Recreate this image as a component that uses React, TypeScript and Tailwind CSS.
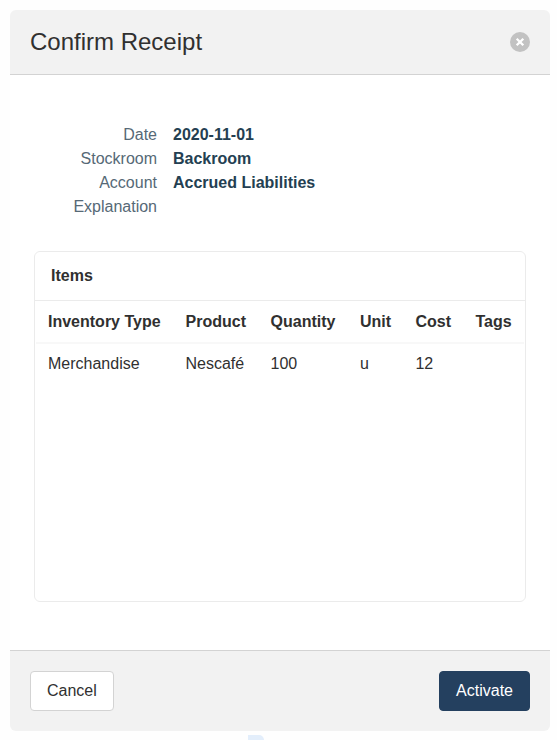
const fields = [
  { label: 'Date', value: '2020-11-01' },
  { label: 'Stockroom', value: 'Backroom' },
  { label: 'Account', value: 'Accrued Liabilities' },
  { label: 'Explanation', value: '' },
];

const columns = ['Inventory Type', 'Product', 'Quantity', 'Unit', 'Cost', 'Tags'];

const items = [['Merchandise', 'Nescafé', '100', 'u', '12', '']];

function CloseIcon() {
  return (
    <svg viewBox="0 0 20 20" className="size-5" aria-hidden="true">
      <circle cx="10" cy="10" r="10" fill="#c2c2c2" />
      <path d="M6.7 6.7l6.6 6.6M13.3 6.7l-6.6 6.6" stroke="#fff" strokeWidth="2.3" />
    </svg>
  );
}

function FieldList() {
  return (
    <dl>
      {fields.map(({ label, value }) => (
        <div key={label} className="flex">
          <dt className="w-1/4 text-right text-[#566976]">{label}</dt>
          <dd className="flex-1 pl-4 font-bold text-[#243f52]">{value}</dd>
        </div>
      ))}
    </dl>
  );
}

function ItemsPanel() {
  return (
    <section className="mt-8 min-h-[351px] rounded-md border border-[#ebebeb] bg-white">
      <h2 className="border-b border-[#ebebeb] px-4 py-3 font-bold">Items</h2>
      <div className="p-px">
        <table className="w-full border-separate border-spacing-0 text-left">
          <thead>
            <tr>
              {columns.map((column) => (
                <th key={column} className="border-b-2 border-[#f8f8f8] px-3 py-2 font-bold whitespace-nowrap">
                  {column}
                </th>
              ))}
            </tr>
          </thead>
          <tbody>
            {items.map((row) => (
              <tr key={row[0]}>
                {row.map((cell, index) => (
                  <td key={columns[index]} className="px-3 py-2">
                    {cell}
                  </td>
                ))}
              </tr>
            ))}
          </tbody>
        </table>
      </div>
    </section>
  );
}

export default function App() {
  return (
    <div className="bg-[#fefefe] pt-2.5 pr-[7px] pl-2.5 font-['Liberation_Sans',Arial,sans-serif] text-base text-[#303030]">
      <div role="dialog" aria-labelledby="dialog-title" className="overflow-hidden rounded-md bg-white">
        <header className="flex items-center justify-between border-b border-[#d3d3d3] bg-[#f2f2f2] p-5">
          <h1 id="dialog-title" className="text-2xl leading-6">
            Confirm Receipt
          </h1>
          <button type="button" aria-label="Close" className="rounded-full">
            <CloseIcon />
          </button>
        </header>
        <main className="px-6 py-12">
          <FieldList />
          <ItemsPanel />
        </main>
        <footer className="flex items-center justify-between border-t border-[#d3d3d3] bg-[#f2f2f2] p-5">
          <button type="button" className="h-10 rounded border border-[#d3d3d3] bg-white px-4">
            Cancel
          </button>
          <button type="button" className="h-10 rounded border border-[#24405f] bg-[#24405f] px-4 text-white">
            Activate
          </button>
        </footer>
      </div>
      <div className="mt-1 ml-[238px] h-[5px] w-4 rounded-tr-md bg-[#e3eefb]" />
    </div>
  );
}
